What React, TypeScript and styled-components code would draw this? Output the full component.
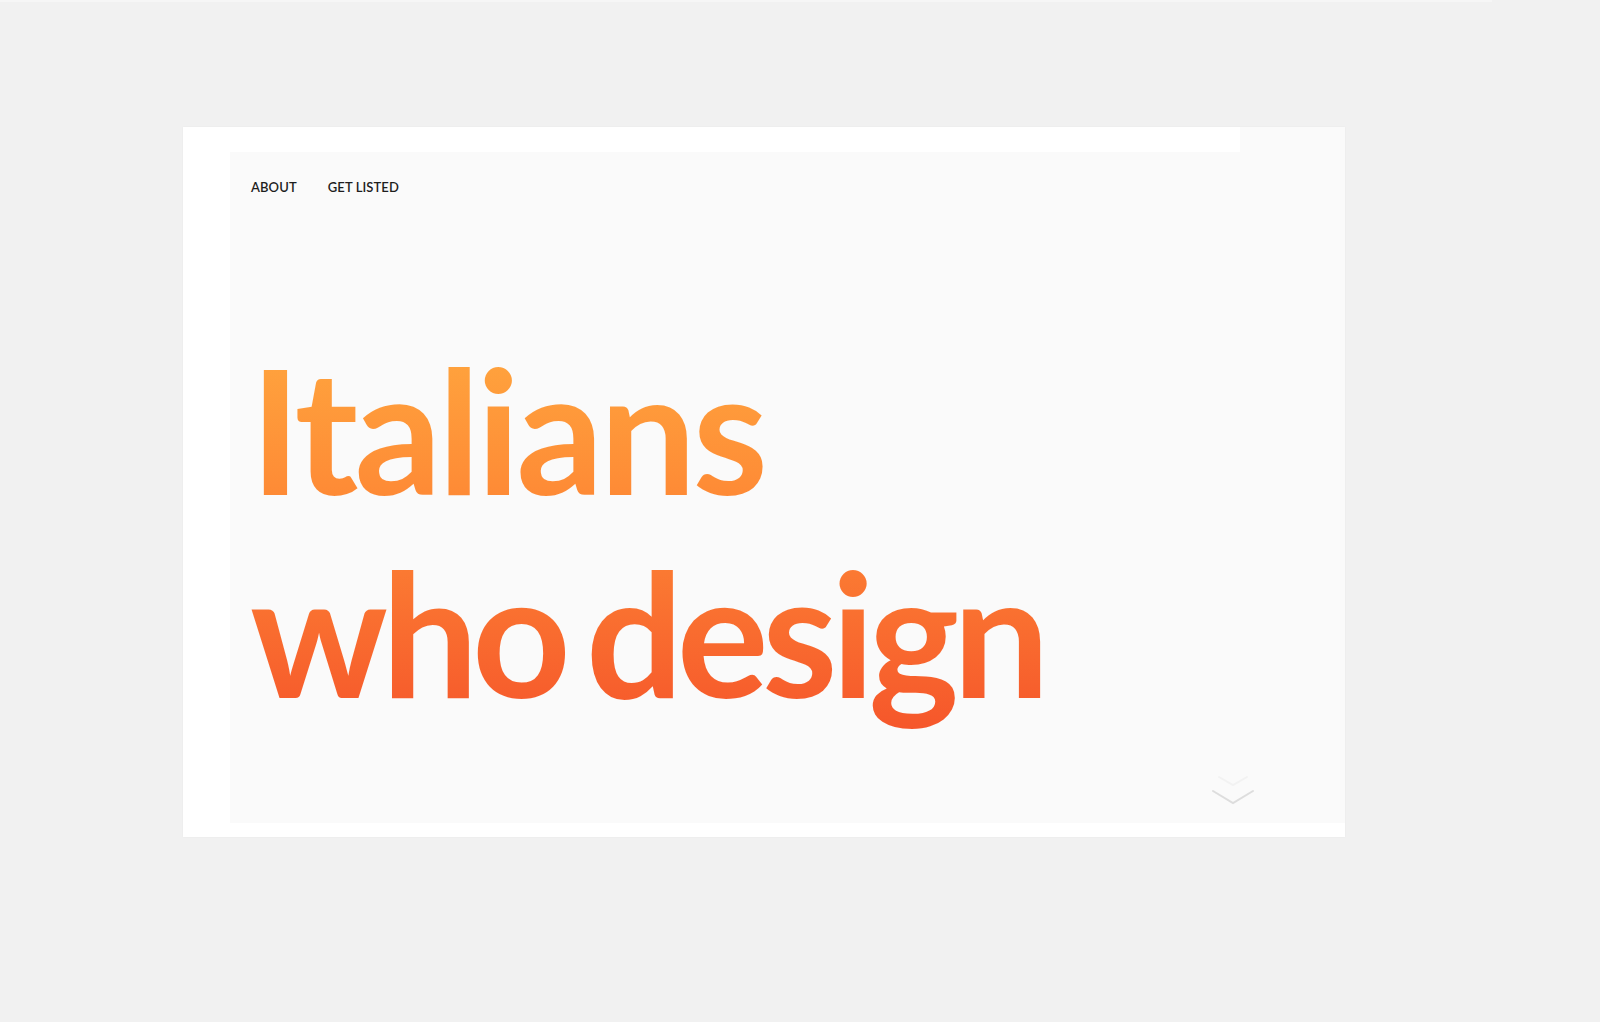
import React from "react";
import styled, { createGlobalStyle } from "styled-components";

const Global = createGlobalStyle`
  html, body {
    margin: 0;
    padding: 0;
    background: #f1f1f1;
  }
  body {
    font-family: Lato, "Open Sans", Arial, sans-serif;
  }
`;

const Page = styled.div`
  position: relative;
  width: 1600px;
  height: 1022px;
  box-sizing: border-box;
  padding: 127px 0 0 183px;
`;

const TopStrip = styled.div`
  position: absolute;
  top: 0;
  left: 0;
  width: 1492px;
  height: 2px;
  background: #f6f6f6;
`;

const Card = styled.section`
  width: 1162px;
  height: 710px;
  background: #fafafa;
  display: flex;
  flex-direction: column;
  box-shadow: 0 0 2px rgba(0, 0, 0, 0.04);
`;

const TopBand = styled.div`
  flex: 0 0 25px;
  width: 1057px;
  background: #ffffff;
`;

const Body = styled.div`
  flex: 1;
  display: flex;
`;

const SideBand = styled.div`
  flex: 0 0 47px;
  background: #ffffff;
`;

const BottomBand = styled.div`
  flex: 0 0 14px;
  background: #ffffff;
`;

const Panel = styled.div`
  position: relative;
  flex: 1;
  background: #fafafa;
  display: flex;
  flex-direction: column;
`;

const Nav = styled.nav`
  display: flex;
  gap: 31px;
  padding: 27px 0 0 21px;
`;

const NavLink = styled.a`
  font-family: Lato, sans-serif;
  font-size: 13px;
  font-weight: 600;
  letter-spacing: 0.1px;
  color: #1e1e1e;
  text-decoration: none;
  line-height: 16px;
`;

const Headline = styled.h1`
  margin: 132px 0 0 0;
  padding: 0 0 12px 20px;
  font-family: Lato, sans-serif;
  font-weight: 700;
  font-size: 172px;
  line-height: 203px;
  background: linear-gradient(180deg, #ffa83f 0%, #fe8c36 38%, #f5532a 100%);
  -webkit-background-clip: text;
  background-clip: text;
  color: transparent;
  width: fit-content;
`;

const Line = styled.span<{ $spacing: number; $word: number }>`
  display: block;
  white-space: nowrap;
  letter-spacing: ${(p) => p.$spacing}px;
  word-spacing: ${(p) => p.$word}px;
`;

const ScrollHint = styled.div`
  position: absolute;
  right: 90px;
  bottom: 18px;
  width: 44px;
  height: 34px;
`;

export default function App() {
  return (
    <>
      <Global />
      <Page>
        <TopStrip />
        <Card>
          <TopBand />
          <Body>
            <SideBand />
            <Panel>
              <Nav>
                <NavLink href="#">ABOUT</NavLink>
                <NavLink href="#">GET LISTED</NavLink>
              </Nav>
              <Headline>
                <Line $spacing={-4} $word={0}>Italians</Line>
                <Line $spacing={-6.5} $word={-14}>who design</Line>
              </Headline>
              <ScrollHint>
                <svg width="44" height="34" viewBox="0 0 44 34" fill="none">
                  <polyline
                    points="2,20 22,32 42,20"
                    stroke="#d6d6d6"
                    strokeWidth="2"
                    strokeLinecap="round"
                    opacity="0.8"
                  />
                  <polyline
                    points="8,6 22,14 36,6"
                    stroke="#f2f2f2"
                    strokeWidth="2"
                    strokeLinecap="round"
                  />
                </svg>
              </ScrollHint>
            </Panel>
          </Body>
          <BottomBand />
        </Card>
      </Page>
    </>
  );
}
